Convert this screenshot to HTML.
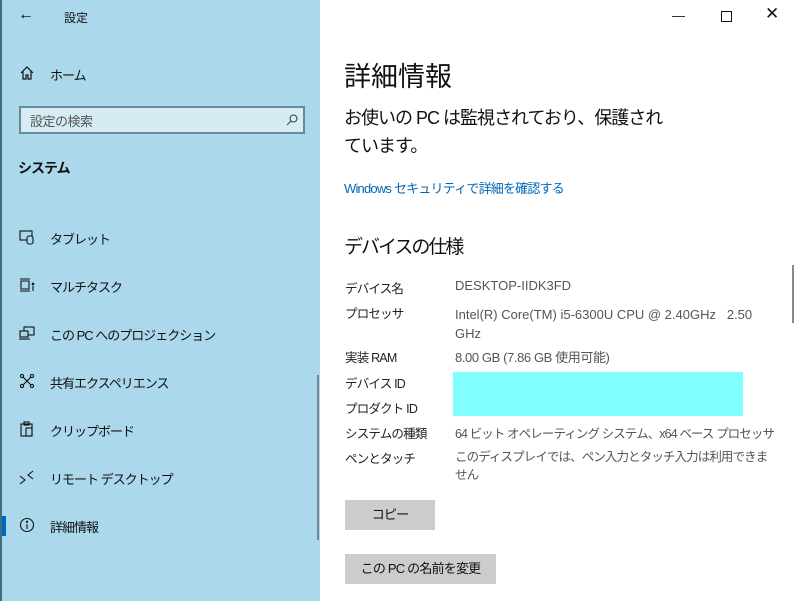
<!DOCTYPE html><html><head><meta charset="utf-8"><style>
body{margin:0;width:796px;height:601px;overflow:hidden;font-family:"Liberation Sans","Noto Sans CJK JP",sans-serif;background:#fff;position:relative}
.a{position:absolute;white-space:nowrap}
#side{position:absolute;left:0;top:0;width:320px;height:601px;background:#acd8ec;border-left:2px solid #3d6e84;box-sizing:border-box}
.n{font-size:13px;color:#111;letter-spacing:-1px}
.r{font-size:12.5px;color:#222;letter-spacing:-0.8px}
.v{font-size:13px;color:#555}
.j{font-size:12.5px;letter-spacing:-0.9px}
svg{position:absolute}
</style></head><body>
<div id="side">
<div class="a" style="left:16px;top:6px;font-size:16px">←</div>
<div class="a" style="left:62px;top:9px;font-size:12px;color:#111">設定</div>
<svg style="left:17px;top:65px" width="16" height="16" viewBox="0 0 16 16" fill="none" stroke="#111" stroke-width="1.2"><path d="M2 8L8 2l6 6M4 6v8h3v-4h2v4h3V6"/></svg>
<div class="a n" style="left:48px;top:65px">ホーム</div>
<div class="a" style="left:17px;top:106px;width:286px;height:28px;border:2px solid #6b8a99;background:#d6ecf5;box-sizing:border-box"></div>
<div class="a" style="left:28px;top:111px;font-size:13px;letter-spacing:-0.5px;color:#555">設定の検索</div>
<svg style="left:283px;top:113px" width="14" height="14" viewBox="0 0 14 14" fill="none" stroke="#444" stroke-width="1.1"><circle cx="8.5" cy="5.5" r="3.5"/><path d="M6 8l-4 4"/></svg>
<div class="a" style="left:16px;top:158px;font-size:14px;font-weight:bold;color:#111;letter-spacing:-1px">システム</div>
<svg style="left:17px;top:229px" width="16" height="16" viewBox="0 0 16 16" fill="none" stroke="#111" stroke-width="1.1"><rect x="1" y="2" width="12" height="9"/><rect x="8" y="7" width="6" height="8" rx="2" fill="#acd8ec"/></svg>
<div class="a n" style="left:48px;top:229px">タブレット</div>
<svg style="left:17px;top:277px" width="16" height="16" viewBox="0 0 16 16" fill="none" stroke="#111" stroke-width="1.1"><path d="M1 2h10M1 14h10M2 4v8h8V4z"/><circle cx="14" cy="7" r=".8" fill="#111"/><path d="M14 9v5"/></svg>
<div class="a n" style="left:48px;top:277px">マルチタスク</div>
<svg style="left:17px;top:325px" width="16" height="16" viewBox="0 0 16 16" fill="none" stroke="#111" stroke-width="1.1"><rect x="5" y="2" width="10" height="8"/><rect x="1" y="6" width="8" height="6" fill="#acd8ec"/><path d="M0 14h11"/></svg>
<div class="a n" style="left:48px;top:325px">この PC へのプロジェクション</div>
<svg style="left:17px;top:373px" width="16" height="16" viewBox="0 0 16 16" fill="none" stroke="#111" stroke-width="1.1"><circle cx="3" cy="3" r="1.6"/><circle cx="13" cy="3" r="1.6"/><circle cx="3" cy="13" r="1.6"/><circle cx="13" cy="13" r="1.6"/><path d="M4 4l8 8M12 4l-8 8"/></svg>
<div class="a n" style="left:48px;top:373px">共有エクスペリエンス</div>
<svg style="left:17px;top:421px" width="16" height="16" viewBox="0 0 16 16" fill="none" stroke="#111" stroke-width="1.1"><rect x="2" y="3" width="11" height="12"/><rect x="5" y="1" width="5" height="3"/><rect x="7" y="7" width="6" height="8"/></svg>
<div class="a n" style="left:48px;top:421px">クリップボード</div>
<svg style="left:17px;top:469px" width="16" height="16" viewBox="0 0 16 16" fill="none" stroke="#111" stroke-width="1.1"><path d="M1 7l5 4-5 4M14 2l-5 4 5 4"/></svg>
<div class="a n" style="left:48px;top:469px">リモート デスクトップ</div>
<div class="a" style="left:0;top:516px;width:4px;height:20px;background:#0067c0"></div>
<svg style="left:17px;top:517px" width="16" height="16" viewBox="0 0 16 16" fill="none" stroke="#111" stroke-width="1.1"><circle cx="8" cy="8" r="6.5"/><path d="M8 7v5"/><circle cx="8" cy="4.8" r=".6" fill="#111"/></svg>
<div class="a n" style="left:48px;top:517px">詳細情報</div>
<div class="a" style="left:315px;top:375px;width:2px;height:165px;background:#7a8a92"></div>
</div>
<div class="a" style="left:672px;top:8px;font-size:13px;color:#111">—</div>
<div class="a" style="left:721px;top:11px;width:9px;height:9px;border:1px solid #111"></div>
<div class="a" style="left:765px;top:4px;font-size:17px;color:#111">✕</div>
<div class="a" style="left:344px;top:55px;font-size:27px;color:#111">詳細情報</div>
<div class="a" style="left:344px;top:104px;font-size:18px;color:#111;line-height:28px;letter-spacing:-1px">お使いの PC は監視されており、保護され<br>ています。</div>
<div class="a" style="left:344px;top:178px;font-size:13px;color:#0067b8;letter-spacing:-0.8px">Windows セキュリティで詳細を確認する</div>
<div class="a" style="left:344px;top:232px;font-size:19px;color:#111;letter-spacing:-2px">デバイスの仕様</div>
<div class="a r" style="left:345px;top:278px">デバイス名</div><div class="a v" style="left:455px;top:278px">DESKTOP-IIDK3FD</div>
<div class="a r" style="left:345px;top:303px">プロセッサ</div><div class="a v" style="left:455px;top:305px;line-height:19px">Intel(R) Core(TM) i5-6300U CPU @ 2.40GHz&nbsp;&nbsp;&nbsp;2.50<br>GHz</div>
<div class="a r" style="left:345px;top:347px">実装 RAM</div><div class="a v" style="left:455px;top:347px;letter-spacing:-0.4px">8.00 GB (7.86 GB 使用可能)</div>
<div class="a r" style="left:345px;top:373px">デバイス ID</div>
<div class="a r" style="left:345px;top:398px">プロダクト ID</div>
<div class="a" style="left:453px;top:372px;width:290px;height:44px;background:#80fffe"></div>
<div class="a r" style="left:345px;top:423px">システムの種類</div><div class="a v j" style="left:455px;top:423px">64 ビット オペレーティング システム、x64 ベース プロセッサ</div>
<div class="a r" style="left:345px;top:448px">ペンとタッチ</div><div class="a v j" style="left:455px;top:448px;line-height:18px">このディスプレイでは、ペン入力とタッチ入力は利用できま<br>せん</div>
<div class="a" style="left:345px;top:500px;width:90px;height:30px;background:#ccc;font-size:13px;color:#111;text-align:center;line-height:30px;letter-spacing:-0.8px">コピー</div>
<div class="a" style="left:345px;top:554px;width:151px;height:30px;background:#ccc;font-size:13px;color:#111;text-align:center;line-height:30px;letter-spacing:-0.8px">この PC の名前を変更</div>
<div class="a" style="left:792px;top:265px;width:2px;height:58px;background:#888"></div>
</body></html>
